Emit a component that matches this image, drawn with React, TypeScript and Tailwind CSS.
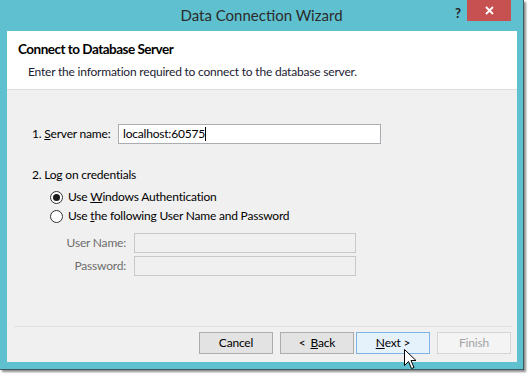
import React from "react";

const font = { fontFamily: 'Lato, "Noto Sans", sans-serif' };

const Radio = ({ checked }: { checked?: boolean }) => (
  <span className="w-[13px] h-[13px] rounded-full border border-[#333] bg-white flex items-center justify-center shrink-0">
    {checked && <span className="w-[7px] h-[7px] rounded-full bg-[#1a1a1a]" />}
  </span>
);

const Button = ({
  children,
  variant,
}: {
  children: React.ReactNode;
  variant?: "default" | "disabled";
}) => {
  const cls =
    variant === "default"
      ? "border-[#7eb4ea] bg-[#e5f1fb] text-black"
      : variant === "disabled"
      ? "border-[#d5d5d5] bg-[#f4f4f4] text-[#a3a3a3]"
      : "border-[#adadad] bg-[#e3e3e3] text-black";
  return (
    <div
      className={`w-[74px] h-[22px] border flex items-center justify-center text-[12px] whitespace-nowrap ${cls}`}
    >
      {children}
    </div>
  );
};

export default function App() {
  return (
    <div className="relative w-[530px] h-[374px] bg-white overflow-hidden" style={font}>
      {/* Window frame */}
      <div className="w-[524px] h-[370px] bg-[#5fc0cf] border-r border-b border-[#3d5a60] shadow-[2px_2px_2px_rgba(0,0,0,0.45)] flex flex-col">
        {/* Title bar */}
        <div className="relative h-[31px] flex items-center justify-center shrink-0">
          <span className="text-[15px] text-[#2b2b2b] -mt-[1px]">Data Connection Wizard</span>
          <span className="absolute left-[455px] top-[4px] text-[13px] font-bold text-[#222]">?</span>
          <div className="absolute left-[467px] top-0 w-[44px] h-[21px] bg-[#c75050] flex items-center justify-center">
            <svg width="9" height="9" viewBox="0 0 9 9">
              <path d="M1 1 L8 8 M8 1 L1 8" stroke="#fff" strokeWidth="1.8" />
            </svg>
          </div>
        </div>

        {/* Client area */}
        <div className="ml-[7px] mr-[6px] mb-[7px] flex-1 flex flex-col">
          <div className="h-[59px] bg-white border-b border-[#dcdcdc] flex flex-col shrink-0">
            <div className="pl-[11px] pt-[9px] text-[13.5px] font-bold text-black leading-[18px] tracking-[-0.5px] whitespace-nowrap">
              Connect to Database Server
            </div>
            <div className="pl-[21px] pt-[6px] text-[12px] text-[#1b1b33] leading-[16px] tracking-[-0.2px] whitespace-nowrap">
              Enter the information required to connect to the database server.
            </div>
          </div>

          <div className="flex-1 bg-[#f0f0f0] flex flex-col text-[12px] text-black leading-[16px] tracking-[-0.2px] whitespace-nowrap">
            <div className="pl-[25px] pt-[34px] flex items-center">
              <span className="w-[86px]">
                1. <span className="underline">S</span>erver name:
              </span>
              <div className="w-[263px] h-[20px] bg-white border border-[#abadb3] flex items-center pl-[4px]">
                localhost:60575
                <span className="w-px h-[14px] bg-black" />
              </div>
            </div>

            <div className="pl-[25px] pt-[23px]">2. Log on credentials</div>

            <div className="pl-[43px] pt-[6px] flex flex-col gap-[3px]">
              <div className="flex items-center gap-[5px]">
                <Radio checked />
                <span>
                  Use <span className="underline">W</span>indows Authentication
                </span>
              </div>
              <div className="flex items-center gap-[5px]">
                <Radio />
                <span>
                  Use <span className="underline">t</span>he following User Name and Password
                </span>
              </div>
            </div>

            <div className="pt-[9px] flex flex-col gap-[3px] text-[#6d6d6d]">
              <div className="flex items-center">
                <span className="w-[120px] text-right pr-[1px]">User Name:</span>
                <div className="ml-[7px] w-[222px] h-[20px] bg-[#f0f0f0] border border-[#c8c8c8]" />
              </div>
              <div className="flex items-center">
                <span className="w-[120px] text-right pr-[1px]">Password:</span>
                <div className="ml-[7px] w-[222px] h-[20px] bg-[#f0f0f0] border border-[#c8c8c8]" />
              </div>
            </div>

            <div className="flex-1" />

            <div className="ml-[7px] mr-[5px] border-t border-[#dfdfdf]" />
            <div className="flex justify-end gap-[7px] pr-[6px] pt-[5px] pb-[8px]">
              <Button>Cancel</Button>
              <div className="flex gap-[2px]">
                <Button>
                  &lt;&nbsp;<span className="underline ml-[2px]">B</span>ack
                </Button>
                <Button variant="default">
                  <span className="underline">N</span>ext &gt;
                </Button>
              </div>
              <Button variant="disabled">Finish</Button>
            </div>
          </div>
        </div>
      </div>

      {/* Mouse cursor */}
      <svg
        className="absolute left-[404px] top-[349px]"
        width="13"
        height="21"
        viewBox="0 0 13 21"
      >
        <path
          d="M0.5 0.5 L0.5 16.5 L4.5 12.5 L7.5 19.5 L10 18.5 L7 11.5 L12 11.5 Z"
          fill="#fff"
          stroke="#000"
          strokeWidth="1"
          strokeLinejoin="miter"
        />
      </svg>
    </div>
  );
}
